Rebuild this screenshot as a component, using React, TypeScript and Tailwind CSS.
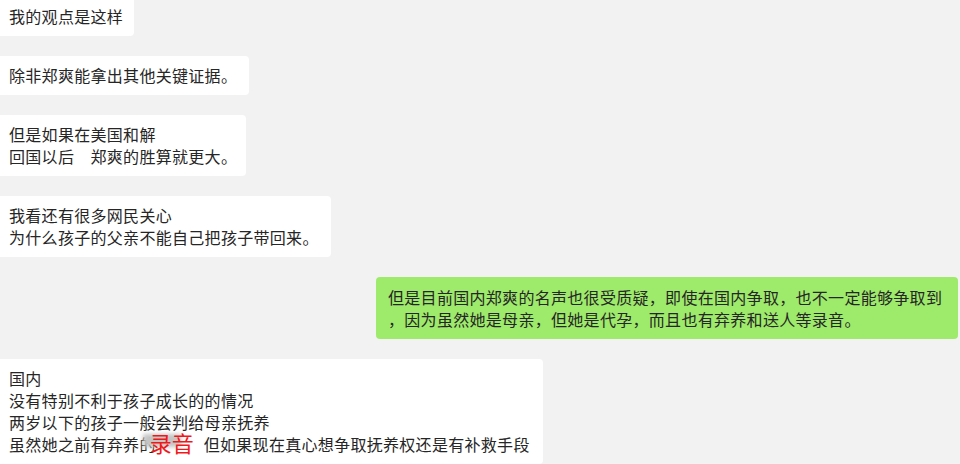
export default function App() {
  const font = { fontFamily: '"Noto Sans CJK SC", "Noto Sans", sans-serif' };

  // left side messages (white bubbles)
  const left = [
    { lines: ["我的观点是这样"], w: "w-[134px]", extra: "-mt-[3px]" },
    { lines: ["除非郑爽能拿出其他关键证据。"], w: "w-[249px]", extra: "" },
    { lines: ["但是如果在美国和解", "回国以后　郑爽的胜算就更大。"], w: "w-[246px]", extra: "" },
    { lines: ["我看还有很多网民关心", "为什么孩子的父亲不能自己把孩子带回来。"], w: "w-[331px]", extra: "" },
  ];

  return (
    <div
      className="w-[960px] h-[464px] overflow-hidden bg-[#f2f2f2] flex flex-col gap-5 text-[16px] leading-[22px] tracking-[0.3px] text-[#262626]"
      style={font}
    >
      {left.map((m, i) => (
        <div
          key={i}
          className={`${m.w} ${m.extra} shrink-0 self-start bg-white rounded-r-[4px] pl-[9px] pr-[11px] pt-[8px] pb-[9px] whitespace-nowrap`}
        >
          {m.lines.map((l, j) => (
            <div key={j}>{l}</div>
          ))}
        </div>
      ))}

      {/* my message */}
      <div className="shrink-0 self-end mr-[2px] w-[582px] bg-[#9eea6a] rounded-[4px] pl-[12px] pr-[10px] pt-[9px] pb-[9px] whitespace-nowrap">
        <div>但是目前国内郑爽的名声也很受质疑，即使在国内争取，也不一定能够争取到</div>
        <div>，因为虽然她是母亲，但她是代孕，而且也有弃养和送人等录音。</div>
      </div>

      <div className="shrink-0 self-start w-[543px] bg-white rounded-r-[4px] pl-[9px] pr-[11px] pt-[8px] pb-[9px] whitespace-nowrap">
        <div>国内</div>
        <div>没有特别不利于孩子成长的的情况</div>
        <div>两岁以下的孩子一般会判给母亲抚养</div>
        <div>
          虽然她之前有弃养的
          <span className="relative inline-block align-top -ml-[6px] mr-[10px] -top-[2px] text-[22px] leading-[22px] tracking-normal text-[#f01818]">
            <span className="absolute left-[-7px] top-[3px] w-[38px] h-[13px] bg-[#c4c4c4] blur-[2px]"></span>
            <span className="relative">录音</span>
          </span>
          但如果现在真心想争取抚养权还是有补救手段
        </div>
      </div>
    </div>
  );
}
